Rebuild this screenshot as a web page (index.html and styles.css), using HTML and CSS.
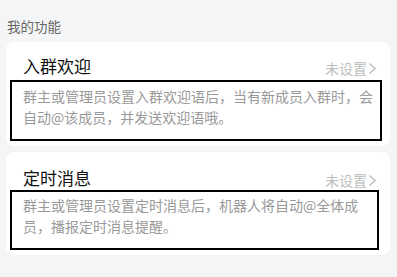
FILE: index.html
```html
<!DOCTYPE html>
<html lang="zh-CN">
<head>
    <meta charset="UTF-8">
    <meta name="viewport" content="width=device-width, initial-scale=1.0">
    <title>我的功能</title>
    <link rel="stylesheet" href="styles.css">
</head>
<body>
    <div class="section-title">我的功能</div>

    <!-- 入群欢迎 -->
    <div class="card card-welcome">
        <div class="card-head">
            <span class="card-name">入群欢迎</span>
            <span class="card-state">未设置<svg class="arrow" width="9" height="13" viewBox="0 0 9 13"><path d="M1.5 1.5 L7 6.5 L1.5 11.5" fill="none" stroke="#c2c2c2" stroke-width="1.6"/></svg></span>
        </div>
        <div class="card-desc">群主或管理员设置入群欢迎语后，当有新成员入群时，会自动@该成员，并发送欢迎语哦。</div>
    </div>

    <!-- 定时消息 -->
    <div class="card card-timer">
        <div class="card-head">
            <span class="card-name">定时消息</span>
            <span class="card-state">未设置<svg class="arrow" width="9" height="13" viewBox="0 0 9 13"><path d="M1.5 1.5 L7 6.5 L1.5 11.5" fill="none" stroke="#c2c2c2" stroke-width="1.6"/></svg></span>
        </div>
        <div class="card-desc">群主或管理员设置定时消息后，机器人将自动@全体成员，播报定时消息提醒。</div>
    </div>
</body>
</html>
```

FILE: styles.css
```css
* {
    box-sizing: border-box;
}
body {
    margin: 0;
    background-color: #f4f5f7;
    font-family: "Noto Sans CJK SC", "Noto Sans", sans-serif;
    color: #333;
}
.section-title {
    padding: 16px 0 0 7px;
    height: 42px;
    font-size: 13.5px;
    line-height: 20px;
    color: #666;
}
.card {
    margin: 0 7px 6px 6px;
    background-color: #fff;
    border-radius: 8px;
    padding-top: 11px;
    padding-bottom: 5px;
}
.card-head {
    display: flex;
    justify-content: space-between;
    align-items: flex-end;
    padding: 0 13px 0 17px;
    height: 25px;
}
.card-name {
    font-size: 17px;
    line-height: 24px;
    color: #111;
}
.card-state {
    display: flex;
    align-items: center;
    font-size: 14px;
    line-height: 20px;
    color: #bdbdbd;
}
.card-state .arrow {
    margin-left: 1px;
}
.card-desc {
    margin: 2px 8px 0 4px;
    border: 2px solid #000;
    padding: 4px 6px 11px 11px;
    font-size: 14px;
    line-height: 21px;
    color: #999;
}
.card-timer {
    padding-top: 13px;
}
.card-timer .card-desc {
    margin-top: 0;
    margin-right: 11px;
    padding-top: 3px;
    padding-right: 18px;
}
```
